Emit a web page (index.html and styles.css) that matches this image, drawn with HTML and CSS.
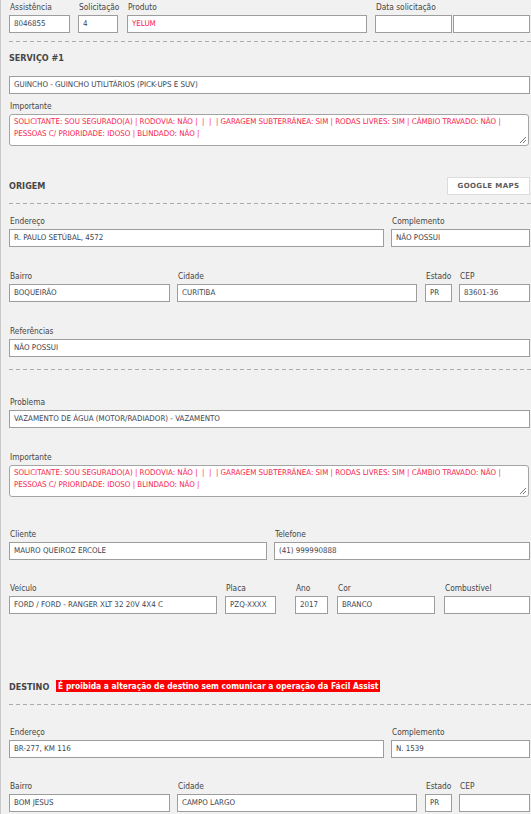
FILE: index.html
```html
<!DOCTYPE html>
<html lang="pt-BR">
<head>
<meta charset="utf-8">
<title>Serviço</title>
<link rel="stylesheet" href="styles.css">
</head>
<body>
<div class="page">

  <div class="row r-top">
    <div class="f w61"><div class="lbl">Assistência</div><div class="inp">8046855</div></div>
    <div class="f w40 ml8"><div class="lbl">Solicitação</div><div class="inp">4</div></div>
    <div class="f w240 ml9"><div class="lbl">Produto</div><div class="inp red">YELUM</div></div>
    <div class="f w155 ml8"><div class="lbl">Data solicitação</div>
      <div class="pair"><div class="inp"></div><div class="inp"></div></div>
    </div>
  </div>

  <div class="sep s1"></div>

  <div class="heading h-serv">SERVIÇO #1</div>
  <div class="inp svc">GUINCHO - GUINCHO UTILITÁRIOS (PICK-UPS E SUV)</div>

  <div class="f imp1">
    <div class="lbl">Importante</div>
    <div class="area">SOLICITANTE: SOU SEGURADO(A) | RODOVIA: NÃO | &nbsp;| &nbsp;| &nbsp;| GARAGEM SUBTERRÂNEA: SIM | RODAS LIVRES: SIM | CÂMBIO TRAVADO: NÃO | PESSOAS C/ PRIORIDADE: IDOSO | BLINDADO: NÃO |<svg class="grip" width="9" height="9" viewBox="0 0 9 9"><path d="M8 2 L2 8 M8 5 L5 8" stroke="#777" stroke-width="1" fill="none"/></svg></div>
  </div>

  <div class="headrow hr-orig">
    <div class="heading">ORIGEM</div>
    <div class="btn">GOOGLE MAPS</div>
  </div>

  <div class="sep s2"></div>

  <div class="row r-a">
    <div class="f w375"><div class="lbl">Endereço</div><div class="inp">R. PAULO SETÚBAL, 4572</div></div>
    <div class="f w139 ml7"><div class="lbl">Complemento</div><div class="inp">NÃO POSSUI</div></div>
  </div>

  <div class="row r-b">
    <div class="f w161"><div class="lbl">Bairro</div><div class="inp">BOQUEIRÃO</div></div>
    <div class="f w240 ml7"><div class="lbl">Cidade</div><div class="inp">CURITIBA</div></div>
    <div class="f w27 ml8"><div class="lbl">Estado</div><div class="inp">PR</div></div>
    <div class="f w71 ml7"><div class="lbl">CEP</div><div class="inp">83601-36</div></div>
  </div>

  <div class="row r-c">
    <div class="f wfull"><div class="lbl">Referências</div><div class="inp">NÃO POSSUI</div></div>
  </div>

  <div class="sep s3"></div>

  <div class="row r-d">
    <div class="f wfull"><div class="lbl">Problema</div><div class="inp">VAZAMENTO DE ÁGUA (MOTOR/RADIADOR) - VAZAMENTO</div></div>
  </div>

  <div class="f imp2">
    <div class="lbl">Importante</div>
    <div class="area">SOLICITANTE: SOU SEGURADO(A) | RODOVIA: NÃO | &nbsp;| &nbsp;| &nbsp;| GARAGEM SUBTERRÂNEA: SIM | RODAS LIVRES: SIM | CÂMBIO TRAVADO: NÃO | PESSOAS C/ PRIORIDADE: IDOSO | BLINDADO: NÃO |<svg class="grip" width="9" height="9" viewBox="0 0 9 9"><path d="M8 2 L2 8 M8 5 L5 8" stroke="#777" stroke-width="1" fill="none"/></svg></div>
  </div>

  <div class="row r-e">
    <div class="f w258"><div class="lbl">Cliente</div><div class="inp">MAURO QUEIROZ ERCOLE</div></div>
    <div class="f w256 ml7"><div class="lbl">Telefone</div><div class="inp">(41) 999990888</div></div>
  </div>

  <div class="row r-f">
    <div class="f w208"><div class="lbl">Veículo</div><div class="inp">FORD / FORD - RANGER XLT 32 20V 4X4 C</div></div>
    <div class="f w51 ml8"><div class="lbl">Placa</div><div class="inp">PZQ-XXXX</div></div>
    <div class="f w33 ml19"><div class="lbl">Ano</div><div class="inp">2017</div></div>
    <div class="f w98 ml9"><div class="lbl">Cor</div><div class="inp">BRANCO</div></div>
    <div class="f w86 ml9"><div class="lbl">Combustível</div><div class="inp"></div></div>
  </div>

  <div class="heading h-dest">DESTINO <span class="warn">É proibida a alteração de destino sem comunicar a operação da Fácil Assist</span></div>

  <div class="sep s4"></div>

  <div class="row r-g">
    <div class="f w375"><div class="lbl">Endereço</div><div class="inp">BR-277, KM 116</div></div>
    <div class="f w139 ml7"><div class="lbl">Complemento</div><div class="inp">N. 1539</div></div>
  </div>

  <div class="row r-h">
    <div class="f w161"><div class="lbl">Bairro</div><div class="inp">BOM JESUS</div></div>
    <div class="f w240 ml7"><div class="lbl">Cidade</div><div class="inp">CAMPO LARGO</div></div>
    <div class="f w27 ml8"><div class="lbl">Estado</div><div class="inp">PR</div></div>
    <div class="f w71 ml7"><div class="lbl">CEP</div><div class="inp"></div></div>
  </div>

</div>
</body>
</html>
```

FILE: styles.css
```css
html, body {
  margin: 0;
  padding: 0;
  background: #f1f1f1;
}

body {
  font-family: "DejaVu Sans Condensed", "DejaVu Sans", sans-serif;
  font-stretch: condensed;
  color: #444;
}

.page {
  border-left: 1px solid #c9c9c9;
  padding: 0 1px 20px 8px;
  min-height: 814px;
  box-sizing: border-box;
  overflow: hidden;
}

.row {
  display: flex;
  align-items: flex-start;
}

.f {
  display: flex;
  flex-direction: column;
  flex: none;
}

.lbl {
  font-size: 8.3px;
  line-height: 15px;
  height: 15px;
  padding-left: 1px;
  color: #454545;
  white-space: nowrap;
}

.inp {
  height: 18px;
  box-sizing: border-box;
  border: 1px solid #9d9d9d;
  background: #fff;
  font-size: 7.9px;
  line-height: 16px;
  padding: 0 4px;
  color: #3b4350;
  white-space: nowrap;
  overflow: hidden;
}

.red {
  color: #f7234d;
}

.pair {
  display: flex;
  gap: 1px;
}

.pair .inp {
  flex: 1;
}

/* widths */
.w61 { width: 61px; }
.w40 { width: 40px; }
.w240 { width: 240px; }
.w155 { width: 155px; }
.w375 { width: 375px; }
.w139 { width: 139px; }
.w161 { width: 161px; }
.w27 { width: 27px; }
.w71 { width: 71px; }
.w258 { width: 258px; }
.w256 { width: 256px; }
.w208 { width: 208px; }
.w51 { width: 51px; }
.w33 { width: 33px; }
.w98 { width: 98px; }
.w86 { width: 86px; }
.wfull { width: 100%; }

.ml7 { margin-left: 7px; }
.ml8 { margin-left: 8px; }
.ml9 { margin-left: 9px; }
.ml19 { margin-left: 19px; }

.sep {
  height: 1px;
  margin-right: -1px;
  background: repeating-linear-gradient(to right, #ababab 0 4px, transparent 4px 7px);
}

.heading {
  font-size: 9px;
  font-weight: bold;
  line-height: 16px;
  color: #454545;
  white-space: nowrap;
}

.headrow {
  display: flex;
  justify-content: space-between;
  align-items: center;
  height: 18px;
}

.btn {
  width: 83px;
  height: 18px;
  box-sizing: border-box;
  border: 1px solid #dcdcdc;
  background: #fff;
  font-family: "DejaVu Sans", sans-serif;
  font-stretch: normal;
  font-weight: bold;
  font-size: 7px;
  line-height: 16px;
  text-align: center;
  color: #5a5a5a;
  letter-spacing: 0.4px;
}

.area {
  position: relative;
  height: 32px;
  box-sizing: border-box;
  border: 1px solid #a4a4a4;
  border-radius: 3px;
  background: #fff;
  font-size: 7.9px;
  line-height: 12px;
  padding: 1px 4px 0 4px;
  margin-right: 1px;
  color: #f7234d;
}

.grip {
  position: absolute;
  right: 1px;
  bottom: 1px;
}

.warn {
  display: inline-block;
  background: #ff0000;
  color: #fff;
  font-size: 8.4px;
  line-height: 12px;
  padding: 0 2px;
  margin-left: 4px;
  vertical-align: 1px;
}

/* vertical rhythm */
.r-top { padding-top: 0; }
.s1 { margin-top: 8px; }
.h-serv { margin-top: 8px; }
.svc { margin-top: 10px; }
.imp1 { margin-top: 5px; }
.hr-orig { margin-top: 31px; }
.s2 { margin-top: 8px; }
.r-a { margin-top: 10px; }
.r-b { margin-top: 22px; }
.r-c { margin-top: 22px; }
.s3 { margin-top: 12px; }
.r-d { margin-top: 25px; }
.imp2 { margin-top: 22px; }
.r-e { margin-top: 30px; }
.r-f { margin-top: 21px; }
.h-dest { margin-top: 65px; }
.s4 { margin-top: 9px; }
.r-g { margin-top: 20px; }
.r-h { margin-top: 21px; }
```
